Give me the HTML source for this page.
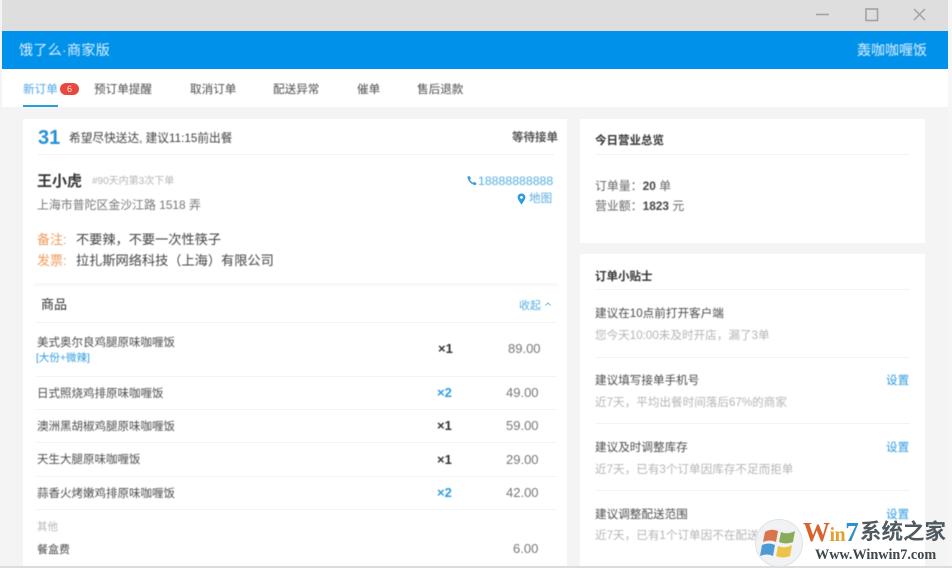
<!DOCTYPE html>
<html><head><meta charset="utf-8">
<style>
html,body{margin:0;padding:0;width:952px;height:568px;overflow:hidden;background:#f7f7f7}
body{position:relative;font-family:"Liberation Sans","Noto Sans CJK SC",sans-serif;color:#4d4d4d}
div,span.a{position:absolute}
.t{white-space:nowrap;line-height:20px;height:20px;font-size:11.6px;filter:blur(.4px)}
.l{background:#f3f3f3;height:1px}
.b{color:#2e9bdc}
.g{color:#b5b5b5}
.d{color:#333}
</style></head><body>
<div style="left:0;top:0;width:2px;height:568px;background:#f4f4f4"></div>
<div style="left:2px;top:0;width:946px;height:31px;background:#dedede"></div>
<div style="left:948px;top:0;width:4px;height:568px;background:#f6f6f6"></div>
<svg style="position:absolute;left:810px;top:4px" width="125" height="22" fill="none" stroke="#a3a3a3" stroke-width="2">
<path d="M6 10.5H19" stroke-width="1.6"/>
<rect x="56" y="5" width="11.500" height="11.500" stroke-width="1.6"/>
<path d="M104 5L115 16M115 5L104 16" stroke-width="1.5"/>
</svg>
<div style="left:2px;top:31px;width:946px;height:38px;background:#0091ea"></div>
<div class="t" style="left:19px;top:40px;font-size:14px;letter-spacing:.35px;color:#dff1fc">饿了么·商家版</div>
<div class="t" style="left:857px;top:40px;font-size:14px;color:#dff1fc">轰咖咖喱饭</div>

<div style="left:2px;top:69px;width:946px;height:38px;background:#fff"></div>
<div style="left:2px;top:107px;width:946px;height:461px;background:#f4f4f4"></div>
<div class="t" style="left:23px;top:80px;color:#4ba6e2">新订单</div>
<div style="left:60px;top:83px;width:19px;height:12px;border-radius:6px;background:#e8483f;color:#fbdcda;font-size:9px;line-height:12px;text-align:center">6</div>
<div style="left:23px;top:105px;width:35px;height:2px;background:#2e9bdc"></div>
<div class="t" style="left:94px;top:80px">预订单提醒</div>
<div class="t" style="left:190px;top:80px">取消订单</div>
<div class="t" style="left:273px;top:80px">配送异常</div>
<div class="t" style="left:357px;top:80px">催单</div>
<div class="t" style="left:417px;top:80px">售后退款</div>

<!-- left card -->
<div style="left:23px;top:119px;width:544px;height:449px;background:#fff"></div>
<div class="t b" style="left:38px;top:128px;font-size:20px;font-weight:bold;color:#2490d4">31</div>
<div class="t" style="left:69px;top:129px;color:#444;font-size:11.700px">希望尽快送达, 建议11:15前出餐</div>
<div class="t" style="left:512px;top:128px;color:#555;font-weight:bold;font-size:11.500px">等待接单</div>
<div class="l" style="left:38px;top:154px;width:516px"></div>

<div class="t" style="left:37px;top:172px;font-size:15px;font-weight:bold;color:#333">王小虎</div>
<div class="t g" style="left:92px;top:172px;font-size:10px">#90天内第3次下单</div>
<div class="t" style="left:37px;top:195px;color:#777;font-size:11.900px">上海市普陀区金沙江路 1518 弄</div>
<svg style="position:absolute;left:466px;top:175px" width="12" height="12" viewBox="0 0 12 12"><path d="M1.5 1.5L3.5 1L5 3.4L4 4.6C4.6 6 5.8 7.2 7.2 7.800L8.400 6.800L10.500 8.400L10 10C6 10.400 1.500 6 1.500 1.500Z" fill="#3a9ed9"/></svg>
<div class="t" style="left:478px;top:171px;color:#58ade0;font-size:12.300px">18888888888</div>
<svg style="position:absolute;left:517px;top:193px" width="9" height="12" viewBox="0 0 9 12"><path fill-rule="evenodd" d="M4.500 .5C2.200 .5 .6 2.200 .6 4.300C.6 6.800 4.500 11.500 4.500 11.500C4.500 11.500 8.400 6.800 8.400 4.300C8.400 2.200 6.800 .5 4.500 .5ZM4.500 3A1.400 1.400 0 1 1 4.500 5.800A1.400 1.400 0 1 1 4.500 3Z" fill="#2e9bdc"/></svg>
<div class="t" style="left:529px;top:189px;color:#58ade0">地图</div>

<div class="t" style="left:37px;top:230px;font-size:13px;color:#ef9a5b">备注:</div>
<div class="t" style="left:76px;top:230px;font-size:13.200px;color:#444">不要辣，不要一次性筷子</div>
<div class="t" style="left:37px;top:251px;font-size:13px;color:#ef9a5b">发票:</div>
<div class="t" style="left:76px;top:251px;font-size:13.200px;color:#444">拉扎斯网络科技（上海）有限公司</div>
<div style="left:35px;top:283px;width:522px;height:3px;background:#f8f8f8"></div>

<div class="t" style="left:41px;top:295px;font-size:13px;color:#333">商品</div>
<div class="t" style="left:519px;top:296px;font-size:11px;color:#58ade0">收起</div>
<svg style="position:absolute;left:545px;top:302px" width="6" height="5"><path d="M.5 3.500L3 1L5.500 3.500" fill="none" stroke="#7dbde6"/></svg>
<div class="l" style="left:35px;top:322px;width:522px"></div>

<div class="t" style="left:37px;top:333px;font-size:11.500px">美式奥尔良鸡腿原味咖喱饭</div>
<div class="t b" style="left:36px;top:348px;font-size:10.500px">[大份+微辣]</div>
<div class="t d" style="left:438px;top:339px;font-size:13px;font-weight:bold">×1</div>
<div class="t" style="left:508px;top:339px;font-size:13px;color:#777">89.00</div>
<div class="l" style="left:37px;top:376px;width:520px"></div>

<div class="t" style="left:37px;top:384px;font-size:11.500px">日式照烧鸡排原味咖喱饭</div>
<div class="t b" style="left:437px;top:383px;font-size:13px;font-weight:bold">×2</div>
<div class="t" style="left:506px;top:383px;font-size:13px;color:#777">49.00</div>
<div class="l" style="left:37px;top:409px;width:520px"></div>

<div class="t" style="left:37px;top:417px;font-size:11.500px">澳洲黑胡椒鸡腿原味咖喱饭</div>
<div class="t d" style="left:437px;top:416px;font-size:13px;font-weight:bold">×1</div>
<div class="t" style="left:506px;top:416px;font-size:13px;color:#777">59.00</div>
<div class="l" style="left:37px;top:442px;width:520px"></div>

<div class="t" style="left:37px;top:450px;font-size:11.500px">天生大腿原味咖喱饭</div>
<div class="t d" style="left:437px;top:450px;font-size:13px;font-weight:bold">×1</div>
<div class="t" style="left:506px;top:450px;font-size:13px;color:#777">29.00</div>
<div class="l" style="left:37px;top:476px;width:520px"></div>

<div class="t" style="left:37px;top:484px;font-size:11.500px">蒜香火烤嫩鸡排原味咖喱饭</div>
<div class="t b" style="left:437px;top:483px;font-size:13px;font-weight:bold">×2</div>
<div class="t" style="left:506px;top:483px;font-size:13px;color:#777">42.00</div>
<div class="l" style="left:37px;top:509px;width:520px"></div>

<div class="t g" style="left:37px;top:517px;font-size:10.500px">其他</div>
<div class="t" style="left:37px;top:540px;font-size:11px">餐盒费</div>
<div class="t" style="left:513px;top:539px;font-size:13px;color:#777">6.00</div>

<!-- right cards -->
<div style="left:580px;top:119px;width:345px;height:124px;background:#fff"></div>
<div class="t d" style="left:595px;top:131px;font-weight:bold;font-size:11.500px">今日营业总览</div>
<div class="l" style="left:595px;top:154px;width:315px"></div>
<div class="t" style="left:595px;top:176px;color:#666;font-size:11.900px">订单量：<b style="color:#444">20</b> 单</div>
<div class="t" style="left:595px;top:196px;color:#666;font-size:11.900px">营业额：<b style="color:#444">1823</b> 元</div>

<div style="left:580px;top:254px;width:345px;height:314px;background:#fff"></div>
<div class="t d" style="left:595px;top:267px;font-weight:bold;font-size:11.500px">订单小贴士</div>
<div class="l" style="left:595px;top:289px;width:315px"></div>
<div class="t" style="left:595px;top:304px">建议在10点前打开客户端</div>
<div class="t g" style="left:595px;top:326px">您今天10:00未及时开店，漏了3单</div>
<div class="l" style="left:595px;top:357px;width:315px"></div>
<div class="t" style="left:595px;top:371px">建议填写接单手机号</div>
<div class="t b" style="left:886px;top:371px">设置</div>
<div class="t g" style="left:595px;top:393px">近7天，平均出餐时间落后67%的商家</div>
<div class="l" style="left:595px;top:423px;width:315px"></div>
<div class="t" style="left:595px;top:438px">建议及时调整库存</div>
<div class="t b" style="left:886px;top:438px">设置</div>
<div class="t g" style="left:595px;top:460px">近7天，已有3个订单因库存不足而拒单</div>
<div class="l" style="left:595px;top:490px;width:315px"></div>
<div class="t" style="left:595px;top:505px">建议调整配送范围</div>
<div class="t b" style="left:886px;top:505px">设置</div>
<div class="t g" style="left:595px;top:526px">近7天，已有1个订单因不在配送范围内</div>

<div style="left:0;top:566px;width:952px;height:2px;background:#dcdcdc"></div>

<!-- watermark -->
<svg style="position:absolute;left:754px;top:518px" width="50" height="50" viewBox="0 0 50 50">
<circle cx="25" cy="25" r="23.500" fill="#eef1f3" fill-opacity=".9" stroke="#dfe3e6"/>
<path d="M11 14Q17 10 24 13L22 24Q16 21 9 24Z" fill="#d9744f"/>
<path d="M27 14Q33 17 41 13L39 24Q32 27 25 24Z" fill="#8aac5a"/>
<path d="M8 27Q15 24 21 27L19 38Q13 35 6 38Z" fill="#4d9ad6"/>
<path d="M24 28Q31 31 38 27L36 38Q29 41 22 38Z" fill="#eec448"/>
</svg>
<div class="t" style="left:803px;top:518px;font-size:27px;line-height:28px;height:28px;font-weight:bold;font-family:'Liberation Serif',serif;color:#d8632e;letter-spacing:-.5px;filter:none">W<span style="color:#e2a02c;font-size:20px">in</span><span style="color:#2f8fcd">7</span></div>
<div class="t" style="left:860px;top:518px;font-size:21.500px;line-height:28px;height:28px;font-weight:bold;color:#4f5a60;filter:none">系统之家</div>
<div class="t" style="left:815px;top:545px;font-size:14.200px;font-weight:bold;font-family:'Liberation Serif',serif;color:#3c464b;filter:none">Www.Winwin7.com</div>
</body></html>
